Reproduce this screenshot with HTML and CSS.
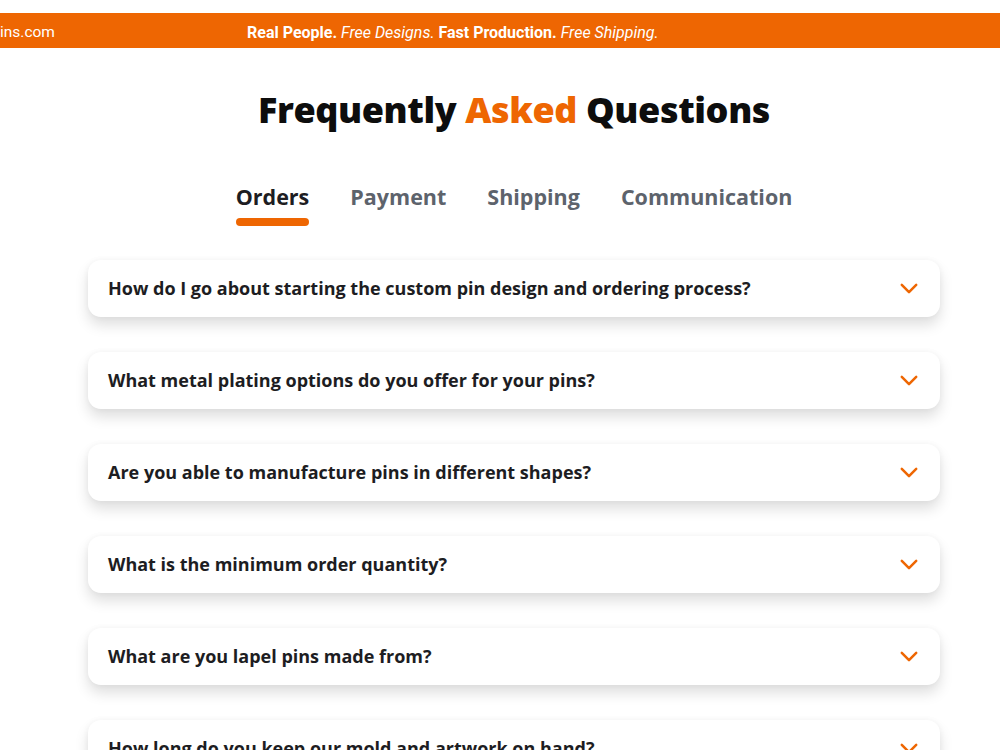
FILE: index.html
```html
<!DOCTYPE html>
<html lang="en">
<head>
<meta charset="utf-8">
<title>FAQ</title>
<link rel="stylesheet" href="styles.css">
</head>
<body>
<div class="promo-bar">
  <span class="promo-site">ins.com</span>
  <p class="promo-text"><b>Real People.</b> <i>Free Designs.</i> <b>Fast Production.</b> <i>Free Shipping.</i></p>
</div>

<main class="faq">
  <h1 class="faq-title">Frequently <span class="accent">Asked</span> Questions</h1>

  <nav class="faq-tabs">
    <a class="tab active">Orders</a>
    <a class="tab">Payment</a>
    <a class="tab">Shipping</a>
    <a class="tab">Communication</a>
  </nav>

  <ul class="faq-list">
    <li class="faq-item"><span>How do I go about starting the custom pin design and ordering process?</span><svg class="chev" viewBox="0 0 20 12"><path d="M2 2l8 8 8-8"/></svg></li>
    <li class="faq-item"><span>What metal plating options do you offer for your pins?</span><svg class="chev" viewBox="0 0 20 12"><path d="M2 2l8 8 8-8"/></svg></li>
    <li class="faq-item"><span>Are you able to manufacture pins in different shapes?</span><svg class="chev" viewBox="0 0 20 12"><path d="M2 2l8 8 8-8"/></svg></li>
    <li class="faq-item"><span>What is the minimum order quantity?</span><svg class="chev" viewBox="0 0 20 12"><path d="M2 2l8 8 8-8"/></svg></li>
    <li class="faq-item"><span>What are you lapel pins made from?</span><svg class="chev" viewBox="0 0 20 12"><path d="M2 2l8 8 8-8"/></svg></li>
    <li class="faq-item"><span>How long do you keep our mold and artwork on hand?</span><svg class="chev" viewBox="0 0 20 12"><path d="M2 2l8 8 8-8"/></svg></li>
  </ul>
</main>
</body>
</html>
```
FILE: styles.css
```css
html, body {
  margin: 0;
  padding: 0;
  background: #fff;
  overflow: hidden;
}

body {
  font-family: "Open Sans", "Noto Sans", sans-serif;
  color: #1d1d22;
}

/* top promo strip */
.promo-bar {
  margin-top: 13px;
  height: 35px;
  box-sizing: border-box;
  padding-top: 3px;
  background: #ee6602;
  color: #fff;
  display: flex;
  align-items: center;
  font-family: Roboto, "Liberation Sans", sans-serif;
  font-size: 16px;
}

.promo-site {
  width: 247px;
  flex: none;
  font-size: 15.5px;
}

.promo-text {
  margin: 0;
}

.promo-text b { font-weight: 700; }
.promo-text i { font-weight: 400; }

/* FAQ block */
.faq {
  width: 852px;
  margin: 0 auto;
  padding: 0 0 0 28px;
  display: flex;
  flex-direction: column;
  align-items: center;
}

.faq-title {
  margin: 38px 0 0;
  font-size: 36px;
  font-weight: 800;
  line-height: 48px;
  letter-spacing: -0.4px;
  color: #0d0d0d;
}

.accent { color: #ee6602; }

.faq-tabs {
  display: flex;
  gap: 41px;
  margin-top: 48px;
}

.tab {
  font-size: 21.5px;
  font-weight: 700;
  color: #5d636c;
  line-height: 30px;
  padding-bottom: 14px;
  position: relative;
}

.tab.active {
  color: #1d1d22;
}

.tab.active::after {
  content: "";
  position: absolute;
  left: 0;
  right: 0;
  bottom: 0;
  height: 8px;
  border-radius: 4px;
  background: #ee6602;
}

.faq-list {
  list-style: none;
  margin: 34px 0 0;
  padding: 0;
  width: 852px;
  display: flex;
  flex-direction: column;
  gap: 35px;
}

.faq-item {
  height: 57px;
  box-sizing: border-box;
  padding: 0 22px 1px 20px;
  background: #fff;
  border-radius: 13px;
  box-shadow: 0 8px 14px rgba(0, 0, 0, 0.13), 0 0 6px rgba(0, 0, 0, 0.04);
  display: flex;
  align-items: center;
  justify-content: space-between;
  font-size: 18px;
  font-weight: 700;
  color: #1d1d22;
}

.chev {
  width: 18px;
  height: 11px;
  fill: none;
  stroke: #ee6602;
  stroke-width: 2.8;
  stroke-linecap: round;
  stroke-linejoin: round;
}
```
